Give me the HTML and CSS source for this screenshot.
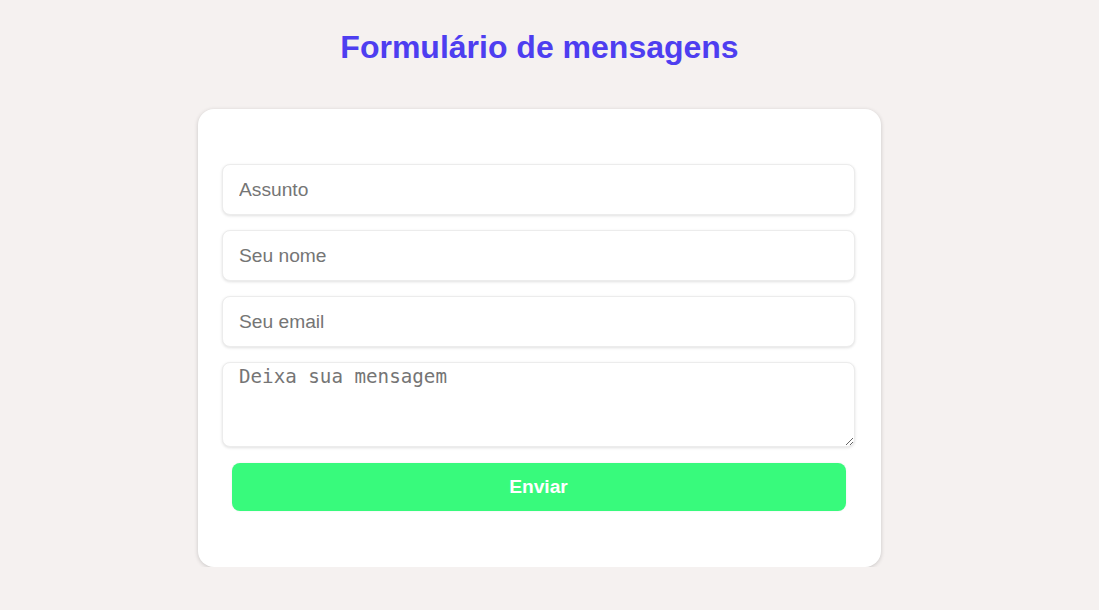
FILE: index.html
```html
<!DOCTYPE html>
<html lang="pt">
<head>
<meta charset="utf-8">
<title>Formulário de mensagens</title>
<link rel="stylesheet" href="styles.css">
</head>
<body>
<main class="page">
  <h1 class="title">Formulário de mensagens</h1>
  <form class="card">
    <input class="field" type="text" placeholder="Assunto">
    <input class="field" type="text" placeholder="Seu nome">
    <input class="field" type="email" placeholder="Seu email">
    <textarea class="field message" placeholder="Deixa sua mensagem"></textarea>
    <button class="send" type="button">Enviar</button>
  </form>
</main>
</body>
</html>
```

FILE: styles.css
```css
html, body {
  margin: 0;
  padding: 0;
  background: #f5f1f0;
}

.page {
  display: flex;
  flex-direction: column;
  align-items: center;
  padding: 29px 20px 0 0;
  font-family: "Liberation Sans", Arial, sans-serif;
}

.title {
  margin: 0;
  font-size: 32px;
  line-height: 37px;
  font-weight: 700;
  color: #4e3ef0;
}

.card {
  box-sizing: border-box;
  width: 683px;
  height: 458px;
  margin-top: 43px;
  padding: 55px 26px 0 24px;
  background: #ffffff;
  border-radius: 16px;
  box-shadow: 0 1px 4px rgba(0, 0, 0, 0.18);
  display: flex;
  flex-direction: column;
  align-items: flex-start;
  gap: 15px;
}

.field {
  box-sizing: border-box;
  width: 633px;
  height: 51px;
  margin: 0;
  padding: 0 16px;
  border: 1px solid #ececec;
  border-radius: 8px;
  box-shadow: 0 1px 3px rgba(0, 0, 0, 0.12);
  background: #ffffff;
  font-family: "Liberation Sans", Arial, sans-serif;
  font-size: 19.2px;
  color: #333;
  outline: none;
}

.field::placeholder {
  color: #757575;
}

.message {
  height: 85px;
  padding: 3px 16px;
  font-family: "DejaVu Sans Mono", monospace;
  font-size: 19.2px;
  line-height: 22px;
  resize: vertical;
}

.send {
  align-self: center;
  width: 614px;
  height: 48px;
  margin: 1px 0 0 0;
  border: none;
  border-radius: 8px;
  background: #38fa7c;
  color: #ffffff;
  font-family: "Liberation Sans", Arial, sans-serif;
  font-size: 19.2px;
  font-weight: 700;
  box-shadow: 0 0 2px rgba(0, 0, 0, 0.08);
  cursor: pointer;
}
```
